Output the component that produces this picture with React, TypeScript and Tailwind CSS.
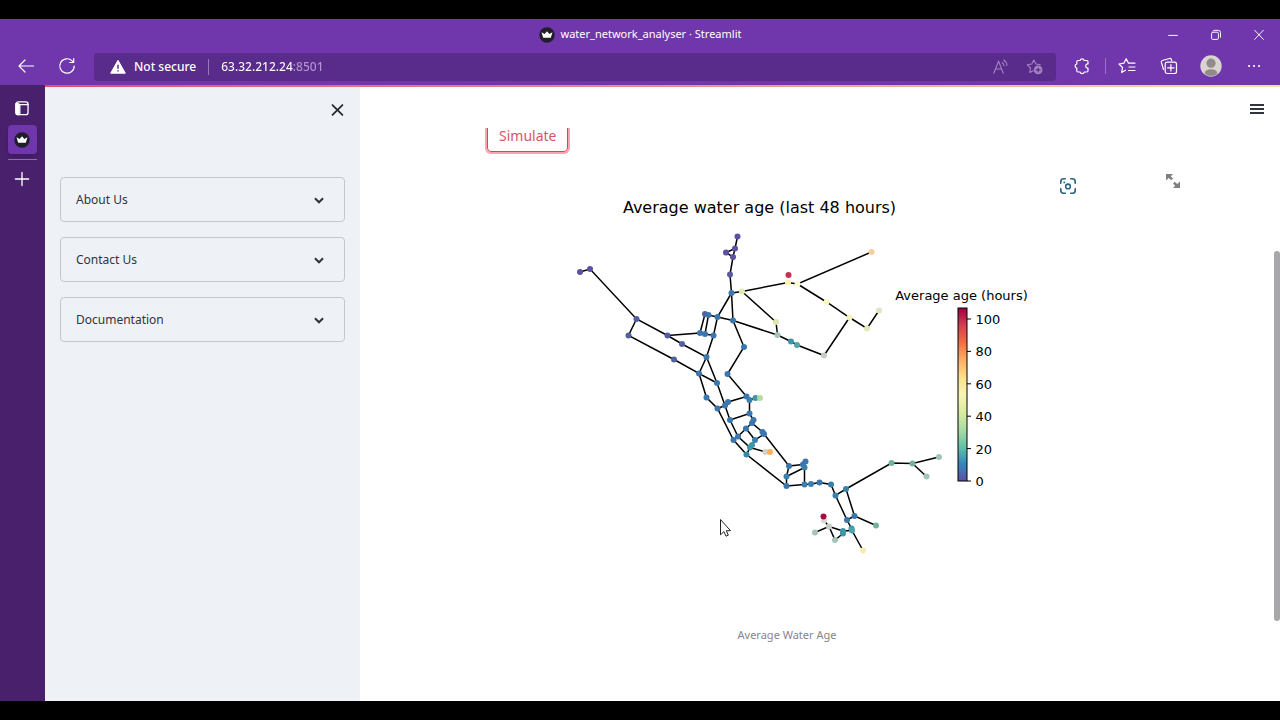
import { useState } from 'react'
import type { ReactNode } from 'react'

type Node = [x: number, y: number, color: string]

const PURPLE = '#5e4fa2'
const INDIGO = '#50619f'
const BLUE = '#3b76ae'
const STEEL = '#3a80ad'
const TEAL = '#3e97a9'
const GREEN = '#74b0a0'
const SAGE = '#a3c4b8'
const GREY = '#c3cfc4'

const nodes: Record<string, Node> = {
  n1: [737.5, 236.5, PURPLE],
  n2: [735, 248.5, PURPLE],
  n3: [726, 252.5, PURPLE],
  n4: [733, 257, PURPLE],
  n5: [730, 274.5, '#5b5aa0'],
  n6: [731.5, 293, BLUE],
  n7: [742, 291.5, '#e3e8ae'],
  n8: [733, 320.5, BLUE],
  n9: [717.5, 317, BLUE],
  n10: [744, 347, BLUE],
  n11: [727.5, 374, BLUE],
  w1: [580, 272, PURPLE],
  w2: [590, 269, PURPLE],
  w3: [636.5, 319, INDIGO],
  w4: [628.5, 335.5, INDIGO],
  w5: [667.5, 335.5, '#575aa0'],
  w6: [682, 344, '#5560a0'],
  w7: [674, 359.5, INDIGO],
  w8: [700, 333, BLUE],
  w9: [705, 334, BLUE],
  w10: [713.5, 335.5, BLUE],
  w11: [705, 314, INDIGO],
  w12: [708.5, 315, BLUE],
  w13: [706.5, 357, BLUE],
  w14: [699, 373.5, BLUE],
  w15: [717, 383, BLUE],
  e1: [788.5, 275, '#c5304f'],
  e2: [788, 282.5, '#fdf4b4'],
  e3: [797.5, 284, '#fffbd0'],
  e4: [871.5, 252, '#f6cf9b'],
  e5: [826.5, 302, '#fbf8bd'],
  e6: [849.5, 317.5, '#f5f4bb'],
  e7: [867, 328.5, '#e3e7bb'],
  e8: [879, 310.5, '#e0e5c0'],
  e9: [824, 355.5, GREY],
  e10: [776, 322, '#dfe6ab'],
  e11: [777.5, 335, SAGE],
  e12: [791, 341.5, TEAL],
  e13: [797, 345, '#4fa6a0'],
  c1: [706.5, 397.5, BLUE],
  c2: [717.5, 408.5, BLUE],
  c3: [725, 405.5, BLUE],
  c4: [728, 402, BLUE],
  c5: [746.5, 396.5, BLUE],
  c6: [749.5, 400, STEEL],
  c7: [755.5, 398, TEAL],
  c8: [760, 398, '#b4dba5'],
  c9: [730, 420, BLUE],
  c10: [749.5, 413.5, BLUE],
  c11: [753.5, 420, BLUE],
  c12: [752, 423, BLUE],
  c13: [746, 428.5, BLUE],
  c14: [762.5, 432, BLUE],
  c15: [764, 434, BLUE],
  c16: [738, 436.5, BLUE],
  c17: [733.5, 440, BLUE],
  c18: [755, 440, STEEL],
  c19: [752, 445, TEAL],
  c20: [750, 447.5, TEAL],
  c21: [746.5, 454.5, '#338ba9'],
  c22: [765.5, 452, '#d5d0c9'],
  c23: [770, 452, '#f5b45e'],
  s1: [789, 466, BLUE],
  s2: [803, 464.5, BLUE],
  s3: [805.5, 461.5, BLUE],
  s4: [804.5, 467.5, STEEL],
  s5: [786.5, 476.5, STEEL],
  s6: [786.5, 486, BLUE],
  s7: [804.5, 484.5, STEEL],
  s8: [811, 484, STEEL],
  s9: [819.5, 482.5, BLUE],
  s10: [831, 484.5, STEEL],
  s11: [835.5, 495.5, STEEL],
  s12: [846, 489, STEEL],
  s13: [891.5, 463, GREEN],
  s14: [912.5, 463.5, GREEN],
  s15: [939, 457, SAGE],
  s16: [926.5, 476.5, SAGE],
  s17: [854.5, 516, BLUE],
  s18: [847, 520, BLUE],
  s19: [876, 525.5, GREEN],
  s20: [851.5, 528.5, TEAL],
  s21: [852, 530.5, '#4ba5aa'],
  s22: [843, 531, TEAL],
  s23: [843, 533.5, TEAL],
  s24: [863, 550.5, '#fbe8b0'],
  s25: [835, 540, SAGE],
  s26: [829, 526.5, GREY],
  s27: [815, 532.5, SAGE],
  s28: [824, 520.5, '#dcd5d2'],
  s29: [823.5, 516.5, '#a30f44'],
}

// each line lists the nodes a run of pipes passes through
const pipes = [
  ['n1', 'n2', 'n4', 'n5', 'n6', 'n8', 'n10', 'n11', 'c5', 'c6', 'c7', 'c8'],
  ['n2', 'n3', 'n4'],
  ['n6', 'n7', 'e2', 'e3', 'e4'],
  ['e3', 'e5', 'e6', 'e7', 'e8'],
  ['e6', 'e9', 'e13', 'e12', 'e11', 'n8', 'n9', 'n6'],
  ['n7', 'e10', 'e11'],
  ['w1', 'w2', 'w3', 'w5', 'w6', 'w13', 'w14', 'w7', 'w4', 'w3'],
  ['w5', 'w8', 'w11', 'w12', 'w9', 'w8'],
  ['w9', 'w10', 'n9', 'w12'],
  ['w10', 'w13', 'w15', 'c3', 'c9', 'c16', 'c20', 'c22', 'c23'],
  ['w15', 'w14', 'c1', 'c2', 'c17', 'c21', 's6', 's7', 's8', 's9', 's10', 's11', 's12', 's13', 's14', 's15'],
  ['c2', 'c3', 'c4', 'c5'],
  ['c6', 'c10', 'c9'],
  ['c10', 'c11', 'c12', 'c14', 'c15', 's1', 's2', 's3'],
  ['c12', 'c13', 'c16', 'c17'],
  ['c13', 'c18', 'c15'],
  ['c18', 'c19', 'c20', 'c21'],
  ['s1', 's5', 's6'],
  ['s5', 's4', 's7'],
  ['s2', 's4'],
  ['s14', 's16'],
  ['s12', 's17', 's19'],
  ['s11', 's18', 's17'],
  ['s18', 's20', 's21', 's24'],
  ['s21', 's22', 's23', 's25', 's26', 's22'],
  ['s27', 's26', 's28', 's29'],
]

const ticks = [100, 80, 60, 40, 20, 0]

const spectral = [
  '#9e0142',
  '#d53e4f',
  '#f46d43',
  '#fdae61',
  '#fee08b',
  '#f7f5b4',
  '#dceba0',
  '#abdda4',
  '#66c2a5',
  '#3288bd',
  '#5e4fa2',
]

function WaterAgeChart() {
  return (
    <svg
      viewBox="487 188 600 430"
      className="w-full max-w-[600px] font-['DejaVu_Sans',sans-serif]"
      role="img"
      aria-label="Average Water Age"
    >
      <defs>
        <linearGradient id="spectral" x1="0" y1="0" x2="0" y2="1">
          {spectral.map((color, i) => (
            <stop key={color} offset={i / (spectral.length - 1)} stopColor={color} />
          ))}
        </linearGradient>
      </defs>

      <text x="759.5" y="213" fontSize="16" textAnchor="middle">
        Average water age (last 48 hours)
      </text>

      {pipes.map((run) => (
        <polyline
          key={run.join()}
          points={run.map((id) => `${nodes[id][0]},${nodes[id][1]}`).join(' ')}
          fill="none"
          stroke="#000"
          strokeWidth="1.5"
        />
      ))}
      {Object.entries(nodes).map(([id, [x, y, color]]) => (
        <circle key={id} cx={x} cy={y} r="3" fill={color} />
      ))}

      {/* Colour bar */}
      <text x="961.5" y="300" fontSize="13" textAnchor="middle">
        Average age (hours)
      </text>
      <rect x="958" y="308" width="9" height="173" fill="url(#spectral)" stroke="#000" />
      {ticks.map((tick) => {
        const y = 481 - tick * 1.62
        return (
          <g key={tick}>
            <line x1="967" x2="971" y1={y} y2={y} stroke="#000" />
            <text x="975.5" y={y + 5} fontSize="13">
              {tick}
            </text>
          </g>
        )
      })}
    </svg>
  )
}

function Crown({ className }: { className: string }) {
  return (
    <svg viewBox="0 0 16 16" className={className} aria-hidden="true">
      <circle cx="8" cy="8" r="7.7" fill="#211d2b" />
      <path d="M2.5 5.3 5.6 7 8 4.2 10.4 7l3.1-1.7-1.7 5.4H4.2z" fill="#fff" />
    </svg>
  )
}

function Icon({ size = 'size-5', children }: { size?: string; children: ReactNode }) {
  return (
    <svg
      viewBox="0 0 20 20"
      className={size}
      fill="none"
      stroke="currentColor"
      strokeWidth="1.2"
      strokeLinecap="round"
      strokeLinejoin="round"
      aria-hidden="true"
    >
      {children}
    </svg>
  )
}

function TitleBar() {
  return (
    <div className="relative flex h-[31px] items-center justify-center">
      <div className="flex items-center gap-[6px] text-[11px] text-white">
        <Crown className="size-4" />
        <span>water_network_analyser · Streamlit</span>
      </div>
      <div className="absolute inset-y-0 right-0 flex text-white">
        <button aria-label="Minimise" className="flex w-[43px] items-center justify-center">
          <Icon size="size-4">
            <path d="M4.5 10.5h11" />
          </Icon>
        </button>
        <button aria-label="Restore" className="flex w-[43px] items-center justify-center">
          <Icon size="size-4">
            <rect x="4.5" y="6.5" width="8.5" height="9" rx="1.5" />
            <path d="M7 4.2h6a2.6 2.6 0 0 1 2.6 2.6v6" />
          </Icon>
        </button>
        <button aria-label="Close window" className="flex w-[43px] items-center justify-center">
          <Icon size="size-4">
            <path d="m4.5 4 11 11.5M15.5 4l-11 11.5" />
          </Icon>
        </button>
      </div>
    </div>
  )
}

function Toolbar() {
  return (
    <div className="flex h-[35px] items-start pr-4 text-white">
      <button aria-label="Back" className="ml-4 flex h-8 w-5 items-center justify-center">
        <Icon>
          <path d="M17.5 10H3M9 4 3 10l6 6" />
        </Icon>
      </button>
      <button aria-label="Refresh" className="ml-[21px] flex h-8 w-5 items-center justify-center">
        <Icon>
          <path d="M17.2 10a7.2 7.2 0 1 1-2.1-5.1l1.4 1.4M16.7 2.5v4h-4" />
        </Icon>
      </button>
      <div className="mt-[3px] ml-[17px] flex h-7 min-w-0 flex-1 items-center rounded-sm bg-[#592b8a] pr-3">
        <svg viewBox="0 0 16 16" className="ml-4 size-4 shrink-0" aria-hidden="true">
          <path d="M8 1.3 15.3 14.2H.7z" fill="#fff" stroke="#fff" strokeLinejoin="round" />
          <path d="M8 5.8v4M8 11.2v1.4" stroke="#592b8a" strokeWidth="1.5" />
        </svg>
        <span className="ml-2 text-xs font-medium whitespace-nowrap">Not secure</span>
        <span className="mx-3 h-4 w-px bg-[#9a76bf]" />
        {/* host in white, port dimmed */}
        <input
          aria-label="Address"
          defaultValue="63.32.212.24:8501"
          className="min-w-0 flex-1 bg-[linear-gradient(to_right,white_72px,#b296cd_72px)] bg-clip-text text-xs font-medium text-transparent caret-white outline-none"
        />
        <button aria-label="Read aloud" className="text-[#a385c2]">
          <Icon size="size-[18px]">
            <path d="M2 17 7.3 3.5 12.5 17M4 12.3h6.7M11.5 5.2c1.2.8 1.8 2 1.9 3.4M13 2.2c2.3 1.3 3.5 3.4 3.6 6" />
          </Icon>
        </button>
        <button aria-label="Add to favourites" className="ml-4 text-[#a385c2]">
          <Icon size="size-[18px]">
            <path d="M8 14.2 4.2 16l.8-5L1.5 7.5l4.9-.8L8.7 2.2l2.3 4.5 4.9.8" />
            <circle cx="13.5" cy="13.2" r="4.2" fill="currentColor" />
            <path d="M13.5 11v4.4M11.3 13.2h4.4" stroke="#592b8a" />
          </Icon>
        </button>
      </div>
      <div className="ml-[17px] flex h-8 items-center">
        <button aria-label="Extensions">
          <Icon>
            <path d="M5 4.5h2.1a2.1 2.1 0 0 1 4.1 0h2.6q1.2 0 1.2 1.2v2.2h-.6a2.2 2.2 0 0 0 0 4.3h.6v2.6q0 1.2-1.2 1.2h-2.6a2.1 2.1 0 0 1-4.1 0H5q-1.2 0-1.2-1.2v-2.6a2.2 2.2 0 0 1 0-4.3V5.7q0-1.2 1.2-1.2" />
          </Icon>
        </button>
        <span className="mx-3 h-4 w-px bg-[#9a76bf]" />
        <button aria-label="Favourites">
          <Icon>
            <path d="M7.5 14.2 3.7 16.5l.8-5L1 8l4.9-.8L8.2 2.7l2.3 4.5H17M11 11h6M10.500 14.5H17" />
          </Icon>
        </button>
        <button aria-label="Collections" className="ml-[21px]">
          <Icon>
            <path d="M4.5 13.5 2.3 6.2q-.3-1.3 1-1.7l7.2-2q1.3-.3 1.8.8l.5 1.4" />
            <rect x="6.2" y="6.2" width="11.3" height="11.3" rx="2" />
            <path d="M11.9 8.7v6.3M8.7 11.9h6.3" />
          </Icon>
        </button>
        <button aria-label="Profile" className="ml-[21px]">
          <svg viewBox="0 0 22 22" className="size-[22px]" aria-hidden="true">
            <circle cx="11" cy="11" r="10.7" fill="#d8d4d2" />
            <circle cx="11" cy="8.2" r="4.6" fill="#918b89" />
            <path d="M4.5 18.5q.7-4.2 6.5-4.2t6.5 4.2q-2.8 2.6-6.5 2.6t-6.5-2.6" fill="#918b89" />
          </svg>
        </button>
        <button aria-label="More" className="ml-[22px]">
          <Icon>
            <path d="M5 10h.1M10 10h.1M15 10h.1" strokeWidth="2" />
          </Icon>
        </button>
      </div>
    </div>
  )
}

function TabRail() {
  return (
    <nav className="flex w-[45px] shrink-0 flex-col items-center bg-[#48206c] pt-3 pr-px text-white">
      <button aria-label="Tab actions">
        <Icon size="size-[22px]">
          <rect x="4.5" y="4.5" width="11" height="11.5" rx="2" />
          <path d="M5 7h10.5M8 7v9" />
          <path d="M4.5 6H7v10h-.8q-1.7 0-1.7-1.7z" fill="currentColor" />
        </Icon>
      </button>
      <button
        aria-label="water_network_analyser"
        className="mt-[6px] flex size-[29px] items-center justify-center rounded-sm bg-[#7036ab] shadow-md"
      >
        <Crown className="size-4" />
      </button>
      <span className="mt-[5px] h-px w-[29px] bg-[#8f6bb0]" />
      <button aria-label="New tab" className="mt-2">
        <Icon size="size-[22px]">
          <path d="M10 4v12M4 10h12" />
        </Icon>
      </button>
    </nav>
  )
}

const sections = ['About Us', 'Contact Us', 'Documentation']

function Sidebar({ onClose }: { onClose: () => void }) {
  return (
    <aside className="w-[315px] shrink-0 bg-[#eef2f6] px-[15px] pt-3">
      <div className="flex justify-end">
        <button aria-label="Close sidebar" onClick={onClose} className="-mr-1 text-[#262730]">
          <Icon size="size-[22px]">
            <path d="m5 5.5 9 9M14 5.5l-9 9" strokeWidth="1.6" />
          </Icon>
        </button>
      </div>
      <div className="mt-14 flex flex-col gap-[15px]">
        {sections.map((title) => (
          <button
            key={title}
            className="flex h-[45px] items-center justify-between rounded border border-[#c3c8cd] pr-4 pl-[15px] text-xs text-[#31333f]"
          >
            {title}
            <Icon size="size-[18px]">
              <path d="m5.5 8 4.5 4.5L14.5 8" strokeWidth="2.2" strokeLinecap="butt" strokeLinejoin="miter" />
            </Icon>
          </button>
        ))}
      </div>
    </aside>
  )
}

function Cursor() {
  return (
    <svg viewBox="0 0 12 20" className="absolute top-[518px] left-[719px] h-5 w-3" aria-hidden="true">
      <path d="M1.5 1.5v15.3l3.4-3.2L7 18.2l2.3-1-2-4.5h4.2z" fill="#fff" stroke="#222" />
    </svg>
  )
}

function Results() {
  return (
    <main className="relative flex min-w-0 flex-1 flex-col bg-white">
      <header className="flex h-[41px] shrink-0 items-center justify-end pt-[3px] pr-[14px] text-[#31333f]">
        <button aria-label="Menu">
          <svg viewBox="0 0 18 18" className="size-[18px]" stroke="currentColor" strokeWidth="2" aria-hidden="true">
            <path d="M2 5h14M2 9h14M2 13h14" />
          </svg>
        </button>
      </header>
      <div className="min-h-0 flex-1 overflow-hidden">
        <div className="mx-auto -mt-2 w-full max-w-[666px]">
          <button className="block h-8 rounded border border-[#e0405c] px-[11px] text-sm leading-4 text-[#d9536b] shadow-[0_0_0_2px_#f6a5b2]">
            Simulate
          </button>
          <figure className="relative mt-9 max-w-[600px] text-center">
            <WaterAgeChart />
            <figcaption className="mt-[9px] text-[11px] leading-4 text-[#85868d]">Average Water Age</figcaption>
            <button aria-label="Visual search" className="absolute top-[-11px] right-[10px] text-[#2a6283]">
              <Icon size="size-[18px]">
                <path
                  d="M2 7V5q0-3 3-3h2M13 2h2q3 0 3 3v2M18 13v2q0 3-3 3h-2M7 18H5q-3 0-3-3v-2"
                  strokeWidth="1.8"
                />
                <circle cx="10" cy="10.5" r="2.6" strokeWidth="1.7" />
                <path d="M5.8 6h.1" strokeWidth="2" />
              </Icon>
            </button>
            <button aria-label="View fullscreen" className="absolute top-[-16px] right-[-95px] text-[#808080]">
              <svg viewBox="0 0 18 18" className="size-[18px]" fill="currentColor" aria-hidden="true">
                <path d="M2 2h7L6.8 4.2 9 6.5 7.3 8.3 4.8 6 2 8.5zM16 16H9l2.2-2.2L9 11.5l1.7-1.8L13.2 12 16 9.5z" />
              </svg>
            </button>
          </figure>
        </div>
      </div>
      <div className="absolute top-[164px] right-0 h-[370px] w-[6px] rounded-full bg-[#a8a8ab]" />
    </main>
  )
}

export default function App() {
  const [sidebarOpen, setSidebarOpen] = useState(true)

  return (
    <div className="relative flex h-screen flex-col overflow-hidden bg-black py-[19px] font-['Noto_Sans',sans-serif]">
      <div className="shrink-0 bg-[#7036ab]">
        <TitleBar />
        <Toolbar />
      </div>
      <div className="flex min-h-0 flex-1">
        <TabRail />
        <div className="flex min-w-0 flex-1 flex-col">
          <div className="h-[2px] shrink-0 bg-linear-to-r from-[#e0506e] via-[#e8907f] to-[#f7dfa0]" />
          <div className="flex min-h-0 flex-1">
            {sidebarOpen && <Sidebar onClose={() => setSidebarOpen(false)} />}
            <Results />
          </div>
        </div>
      </div>
      <Cursor />
    </div>
  )
}
